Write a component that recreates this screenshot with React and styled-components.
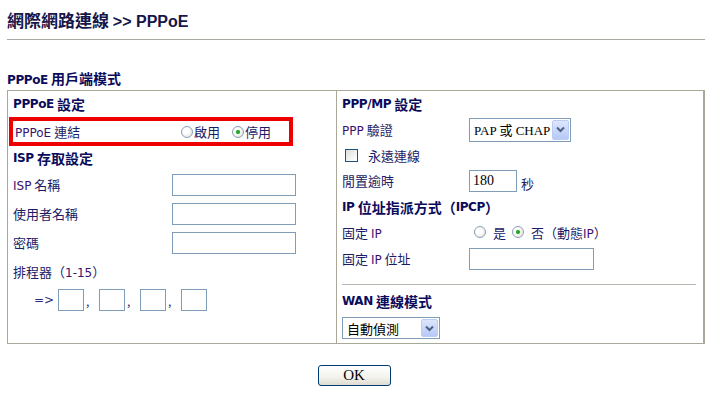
import styled, { createGlobalStyle } from 'styled-components';

const GlobalStyle = createGlobalStyle`
  body {
    margin: 0;
    background: #fff;
    font-family: "DejaVu Sans", "Noto Sans CJK TC", sans-serif;
    font-size: 13px;
    color: #1b1b66;
  }
`;

const Page = styled.div`
  width: 712px;
  height: 394px;
  padding: 0 7px;
  box-sizing: border-box;
`;

const Title = styled.div`
  height: 39px;
  line-height: 40px;
  border-bottom: 1px solid #a8a8a0;
  font-family: "Noto Sans CJK TC", sans-serif;
  font-size: 17px;
  font-weight: bold;
  color: #16164a;
  white-space: nowrap;
`;

const TitleLatin = styled.span`
  font-family: "Liberation Sans", Arial, sans-serif;
  font-size: 16px;
`;

const SubTitle = styled.div`
  margin-top: 26px;
  height: 24px;
  line-height: 24px;
  font-size: 14px;
  font-weight: bold;
  color: #0b0b5c;
  font-family: "Noto Sans CJK TC", sans-serif;
`;

const Latin = styled.span`
  font-family: "DejaVu Sans", Verdana, sans-serif;
  font-size: 12px;
  letter-spacing: ${({ $bold }) => ($bold ? '-0.4px' : '0')};
  color: ${({ $bold }) => ($bold ? 'inherit' : '#3b1170')};
`;

const Box = styled.div`
  display: grid;
  grid-template-columns: 329px 1fr;
  height: 254px;
  border: 1px solid #aca899;
  border-right-width: 2px;
  box-sizing: border-box;
`;

const Panel = styled.div`
  display: flex;
  flex-direction: column;
  padding: 0 5px;
  border-right: ${({ $divider }) => ($divider ? '1px solid #aca899' : 'none')};
  font-family: "Noto Sans CJK TC", sans-serif;
`;

const Heading = styled.div`
  height: ${({ $h }) => $h || 26}px;
  display: flex;
  align-items: center;
  font-size: 14px;
  font-weight: bold;
  color: #0b0b5c;
  white-space: nowrap;
`;

const Row = styled.div`
  height: ${({ $h }) => $h || 29}px;
  display: flex;
  align-items: center;
  white-space: nowrap;
`;

const Label = styled.div`
  width: ${({ $w }) => $w || 159}px;
  flex-shrink: 0;
`;

const Highlight = styled.div`
  margin-left: -4px;
  width: 284px;
  height: 29px;
  box-sizing: border-box;
  border: 4px solid #ee0000;
  padding-left: 2px;
  display: flex;
  align-items: center;
  white-space: nowrap;
`;

const TextInput = styled.div`
  width: ${({ $w }) => $w}px;
  height: 22px;
  box-sizing: border-box;
  border: 1px solid #7f9db9;
  background: #fff;
  font-family: "Liberation Serif", serif;
  font-size: 14px;
  color: #000;
  line-height: 20px;
  padding-left: 3px;
`;

const RadioItem = styled.label`
  display: flex;
  align-items: center;
  gap: ${({ $gap }) => $gap || 1}px;
  margin-right: ${({ $mr }) => $mr || 0}px;
`;

const Radio = styled.span`
  width: 12px;
  height: 12px;
  box-sizing: border-box;
  border-radius: 50%;
  border: 1px solid #8aa0b8;
  background: radial-gradient(circle at 40% 40%, #ffffff 30%, #dcdcd2 100%);
  display: flex;
  align-items: center;
  justify-content: center;
  &::after {
    content: '';
    width: 4px;
    height: 4px;
    border-radius: 50%;
    background: ${({ $checked }) => ($checked ? '#29a329' : 'transparent')};
    box-shadow: ${({ $checked }) => ($checked ? '0 0 1px #6fd66f' : 'none')};
  }
`;

const Checkbox = styled.span`
  width: 13px;
  height: 13px;
  box-sizing: border-box;
  border: 1px solid #1c5180;
  background: linear-gradient(135deg, #dcdcd7 0%, #ffffff 90%);
  margin: 0 10px 0 3px;
`;

const SelectBox = styled.div`
  width: ${({ $w }) => $w}px;
  height: ${({ $h }) => $h || 24}px;
  box-sizing: border-box;
  border: 1px solid #7f9db9;
  background: #fff;
  display: flex;
  align-items: center;
  justify-content: space-between;
  padding: 1px;
  color: #000;
`;

const SelectText = styled.span`
  padding-left: 3px;
  font-family: ${({ $serif }) =>
    $serif ? '"Liberation Serif", "Noto Sans CJK TC", serif' : '"Noto Sans CJK TC", sans-serif'};
  font-size: 13px;
`;

const DropButton = styled.span`
  width: 17px;
  height: 100%;
  box-sizing: border-box;
  border: 1px solid #bccdf5;
  border-radius: 2px;
  background: linear-gradient(180deg, #dce6fd 0%, #b6c9f7 100%);
  display: flex;
  align-items: center;
  justify-content: center;
`;

const Small = styled.div`
  width: 26px;
  height: 22px;
  box-sizing: border-box;
  border: 1px solid #7f9db9;
  background: #fff;
`;

const Comma = styled.span`
  width: 15px;
  align-self: flex-end;
  padding: 0 0 4px 2px;
  box-sizing: border-box;
  font-size: 12px;
`;

const Arrow = styled.span`
  margin: 0 4px 0 21px;
  font-family: "DejaVu Sans", sans-serif;
  font-size: 12px;
  color: #2a2a80;
`;

const Unit = styled.span`
  margin-left: 4px;
  padding-top: 6px;
`;

const Rule = styled.div`
  height: 1px;
  background: #b8b8b0;
  margin: 11px 2px 0 0;
`;

const Footer = styled.div`
  display: flex;
  justify-content: center;
  padding-top: 21px;
  padding-right: 4px;
`;

const OkButton = styled.button`
  width: 73px;
  height: 21px;
  border: 1px solid #003c74;
  border-radius: 3px;
  background: linear-gradient(180deg, #ffffff 0%, #f3f2ec 60%, #dedcd0 100%);
  font-family: "Liberation Serif", serif;
  font-size: 15px;
  color: #000;
  padding: 0;
  line-height: 19px;
`;

const Chevron = () => (
  <svg width="9" height="7" viewBox="0 0 9 7">
    <path d="M1 1.5 L4.5 5 L8 1.5" fill="none" stroke="#4d6185" strokeWidth="2" />
  </svg>
);

export default function App() {
  return (
    <Page>
      <GlobalStyle />
      <Title>
        網際網路連線 <TitleLatin>&gt;&gt; PPPoE</TitleLatin>
      </Title>
      <SubTitle>
        <Latin $bold>PPPoE</Latin> 用戶端模式
      </SubTitle>
      <Box>
        <Panel $divider>
          <Heading $h={26}>
            <Latin $bold>PPPoE</Latin>&nbsp;設定
          </Heading>
          <Highlight>
            <Label $w={166}>
              <Latin>PPPoE</Latin> 連結
            </Label>
            <RadioItem $mr={12}>
              <Radio />
              <span>啟用</span>
            </RadioItem>
            <RadioItem>
              <Radio $checked />
              <span>停用</span>
            </RadioItem>
          </Highlight>
          <Heading $h={24}>
            <Latin $bold>ISP</Latin>&nbsp;存取設定
          </Heading>
          <Row>
            <Label>
              <Latin>ISP</Latin> 名稱
            </Label>
            <TextInput $w={124} />
          </Row>
          <Row>
            <Label>使用者名稱</Label>
            <TextInput $w={124} />
          </Row>
          <Row>
            <Label>密碼</Label>
            <TextInput $w={124} />
          </Row>
          <Row>
            <Label>
              排程器（<Latin>1-15</Latin>）
            </Label>
          </Row>
          <Row $h={27}>
            <Arrow>=&gt;</Arrow>
            <Small />
            <Comma>,</Comma>
            <Small />
            <Comma>,</Comma>
            <Small />
            <Comma>,</Comma>
            <Small />
          </Row>
        </Panel>
        <Panel>
          <Heading $h={26}>
            <Latin $bold>PPP/MP</Latin>&nbsp;設定
          </Heading>
          <Row $h={25}>
            <Label $w={127}>
              <Latin>PPP</Latin> 驗證
            </Label>
            <SelectBox $w={102}>
              <SelectText $serif>PAP 或 CHAP</SelectText>
              <DropButton>
                <Chevron />
              </DropButton>
            </SelectBox>
          </Row>
          <Row $h={26}>
            <Checkbox />
            <span>永遠連線</span>
          </Row>
          <Row $h={25}>
            <Label $w={127}>閒置逾時</Label>
            <TextInput $w={48}>180</TextInput>
            <Unit>秒</Unit>
          </Row>
          <Heading $h={27}>
            <Latin $bold>IP</Latin>&nbsp;位址指派方式（<Latin $bold>IPCP</Latin>）
          </Heading>
          <Row $h={24}>
            <Label $w={132}>
              固定 <Latin>IP</Latin>
            </Label>
            <RadioItem $gap={7} $mr={6}>
              <Radio />
              <span>是</span>
            </RadioItem>
            <RadioItem $gap={7}>
              <Radio $checked />
              <span>
                否（動態<Latin>IP</Latin>）
              </span>
            </RadioItem>
          </Row>
          <Row $h={29}>
            <Label $w={127}>
              固定 <Latin>IP</Latin> 位址
            </Label>
            <TextInput $w={125} />
          </Row>
          <Rule />
          <Heading $h={32}>
            <Latin $bold>WAN</Latin>&nbsp;連線模式
          </Heading>
          <SelectBox $w={98} $h={22}>
            <SelectText>自動偵測</SelectText>
            <DropButton>
              <Chevron />
            </DropButton>
          </SelectBox>
        </Panel>
      </Box>
      <Footer>
        <OkButton>OK</OkButton>
      </Footer>
    </Page>
  );
}
